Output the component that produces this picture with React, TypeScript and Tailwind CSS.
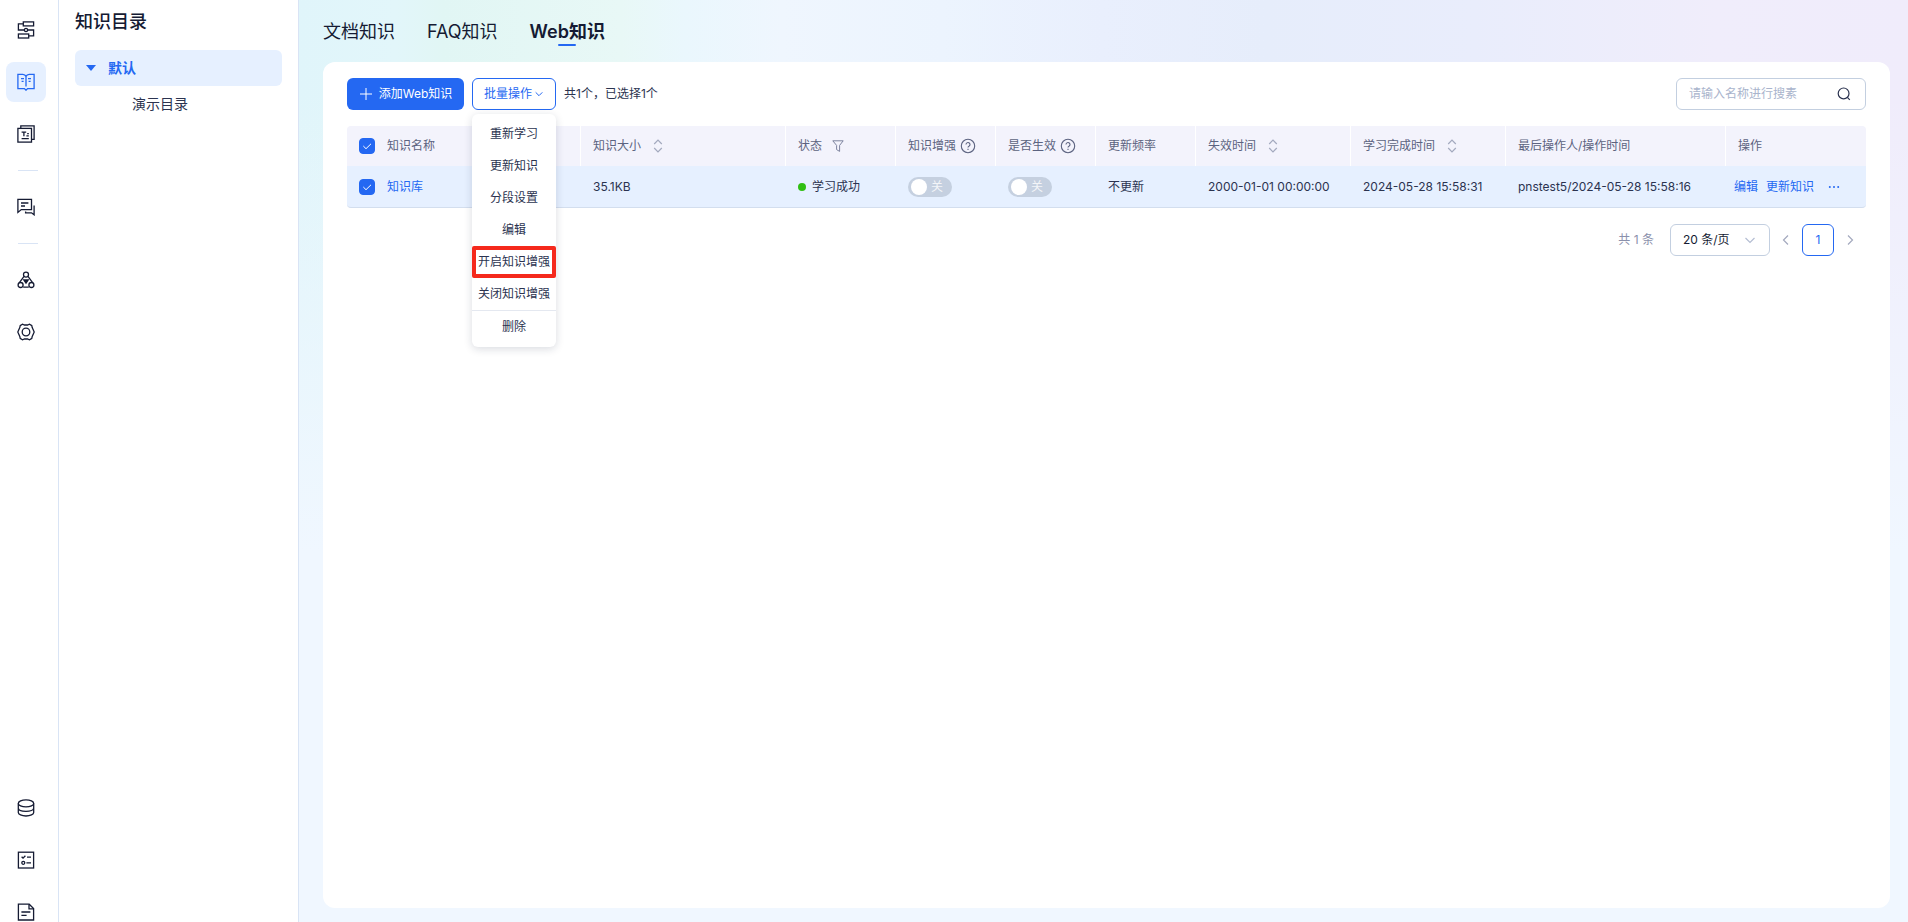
import { useState } from "react";
import type { ReactNode } from "react";

type WebKnowledge = {
  id: number;
  name: string;
  size: string;
  status: string;
  enhanced: boolean;
  enabled: boolean;
  frequency: string;
  expireAt: string;
  learnedAt: string;
  operator: string;
};

const initialRows: WebKnowledge[] = [
  {
    id: 1,
    name: "知识库",
    size: "35.1KB",
    status: "学习成功",
    enhanced: false,
    enabled: false,
    frequency: "不更新",
    expireAt: "2000-01-01 00:00:00",
    learnedAt: "2024-05-28 15:58:31",
    operator: "pnstest5/2024-05-28 15:58:16",
  },
];

const tabs = ["文档知识", "FAQ知识", "Web知识"];

const batchActions = ["重新学习", "更新知识", "分段设置", "编辑", "开启知识增强", "关闭知识增强", "删除"];

const Icon = ({ children }: { children: ReactNode }) => (
  <svg
    viewBox="0 0 18 18"
    className="w-[18px] h-[18px]"
    fill="none"
    stroke="currentColor"
    strokeWidth="1.3"
    aria-hidden="true"
  >
    {children}
  </svg>
);

const FlowIcon = () => (
  <Icon>
    <rect x="6.3" y="0.9" width="10.3" height="4" />
    <path d="M6.3 2.9H1.4V9h5.9M10.7 9h5.9v5.9h-4.9" />
    <circle cx="9" cy="9" r="1.6" />
    <rect x="1.4" y="13" width="10.3" height="4" />
  </Icon>
);

const BookIcon = () => (
  <Icon>
    <path d="M9 3.6C8.4 2 7.4 1.4 5.8 1.4H.9v14.2h6.5L9 17.2l1.6-1.6h6.5V1.4h-4.9C10.6 1.4 9.6 2 9 3.6v10" />
    <path d="M4 5.7h3M4.6 8.4h2M11 5.7h3M11.6 8.4h2" />
  </Icon>
);

const TemplateIcon = () => (
  <Icon>
    <rect x="0.9" y="3.4" width="13.6" height="13.7" />
    <path d="M3.8 3.4V.9h13.3v13.4h-2.6" />
    <path d="M4.6 7.2h4.6M6.9 7.2v4M10.2 8.6h1.6M9.4 10.9h2.4M4.6 13.6h7.2" />
  </Icon>
);

const ChatIcon = () => (
  <Icon>
    <path d="M.9 1.4h13.6v10.2H4.3L.9 14.4z" />
    <path d="M4 5h7.4M4 8h4M17.1 7.4v9.4l-2.6-2H8.6v-1.2" />
  </Icon>
);

const NetworkIcon = () => (
  <Icon>
    <circle cx="9" cy="3.6" r="2.5" />
    <circle cx="3.6" cy="14" r="2.5" />
    <circle cx="14.4" cy="14" r="2.5" />
    <path d="M7 5.4L2.4 11.6M11 5.4l4.6 6.2M6.2 16.2h5.6" />
    <path d="M6.8 9h4.4L9 12.2z" fill="currentColor" />
  </Icon>
);

const SettingIcon = () => (
  <Icon>
    <path
      d="M5.4 1.2L7.2 2h3.6l1.8-.8 2.2 1.4.4 2L17.2 9l-2 4.4-.4 2-2.2 1.4-1.8-.8H7.2l-1.8.8-2.2-1.4-.4-2L.8 9l2-4.4.4-2z"
      strokeLinejoin="round"
    />
    <circle cx="9" cy="9" r="3.8" />
  </Icon>
);

const DatabaseIcon = () => (
  <Icon>
    <ellipse cx="9" cy="4.4" rx="7.7" ry="3.5" />
    <path d="M1.3 4.4v9c0 2 3.4 3.6 7.7 3.6s7.7-1.6 7.7-3.6v-9M1.3 9c0 1.9 3.4 3.3 7.7 3.3s7.7-1.4 7.7-3.3" />
  </Icon>
);

const ChecklistIcon = () => (
  <Icon>
    <rect x="1.4" y="1.2" width="15.2" height="15.8" />
    <path d="M4.6 5.8l1.4 1.3 2.4-2.4M10 6.2h4M9.4 11.8H14" />
    <circle cx="6.3" cy="11.8" r="1.5" />
  </Icon>
);

const FileIcon = () => (
  <Icon>
    <path d="M1.4 1.2h10.8l4.4 4.4V17H1.4z" />
    <path d="M12 1.2v4.6h4.6M4.4 9h9M4.4 12.4h5.2" />
  </Icon>
);

const RailButton = ({ label, active, children }: { label: string; active?: boolean; children: ReactNode }) => (
  <button
    type="button"
    aria-label={label}
    className={`flex w-10 h-10 shrink-0 items-center justify-center rounded-lg ${
      active ? "bg-[#e6f0ff] text-[#2468f2]" : "text-[#151b33]"
    }`}
  >
    {children}
  </button>
);

const RailDivider = () => <div className="ml-3 my-1 w-5 h-px bg-[#d9e4f5]" />;

const Chevron = ({ d, className }: { d: string; className: string }) => (
  <svg viewBox="0 0 12 12" className={className} fill="none" stroke="currentColor" strokeWidth="1.2" aria-hidden="true">
    <path d={d} />
  </svg>
);

const Sorter = () => (
  <button type="button" aria-label="排序" className="text-[#a3a9be]">
    <svg viewBox="0 0 10 14" className="w-2.5 h-3.5" fill="none" stroke="currentColor" strokeWidth="1.2" aria-hidden="true">
      <path d="M1.2 5L5 1.2 8.8 5M1.2 9L5 12.8 8.8 9" />
    </svg>
  </button>
);

const HelpIcon = () => (
  <svg viewBox="0 0 16 16" className="w-4 h-4 text-[#5c6380]" fill="none" stroke="currentColor" strokeWidth="1.1" aria-hidden="true">
    <circle cx="8" cy="8" r="6.7" />
    <path d="M6 6.5a2 1.9 0 1 1 3.2 1.5C8.4 8.5 8 8.8 8 9.6M8 10.8v1.1" />
  </svg>
);

const Checkbox = ({ label, checked, onChange }: { label: string; checked: boolean; onChange: () => void }) => (
  <span className="grid w-4 h-4 shrink-0">
    <input
      type="checkbox"
      aria-label={label}
      checked={checked}
      onChange={onChange}
      className="col-start-1 row-start-1 appearance-none w-4 h-4 rounded-sm border border-[#c3cfe0] bg-white checked:border-[#2468f2] checked:bg-[#2468f2]"
    />
    <svg
      viewBox="0 0 16 16"
      className="col-start-1 row-start-1 w-4 h-4 pointer-events-none text-white"
      fill="none"
      stroke="currentColor"
      aria-hidden="true"
    >
      <path d="M4.3 8l2.7 2.7L12 5.8" />
    </svg>
  </span>
);

const Toggle = ({ label, on, onClick }: { label: string; on: boolean; onClick: () => void }) => (
  <button
    type="button"
    role="switch"
    aria-checked={on}
    aria-label={label}
    onClick={onClick}
    className={`flex w-11 h-5 items-center gap-1 rounded-full px-[3px] text-white ${
      on ? "flex-row-reverse bg-[#2468f2]" : "bg-[#c5d0e0]"
    }`}
  >
    <span className="w-4 h-4 shrink-0 rounded-full bg-white" />
    <span className="opacity-80">{on ? "开" : "关"}</span>
  </button>
);

const th = "border-r border-white px-3 text-left font-normal";

const App = () => {
  const [tab, setTab] = useState("Web知识");
  const [rows, setRows] = useState<WebKnowledge[]>(initialRows);
  const [selected, setSelected] = useState<number[]>([1]);
  const [menuOpen, setMenuOpen] = useState(true);
  const [keyword, setKeyword] = useState("");

  const allSelected = selected.length === rows.length;

  const toggleRow = (id: number) => {
    setSelected((prev) => (prev.includes(id) ? prev.filter((s) => s !== id) : [...prev, id]));
  };

  const toggleField = (id: number, field: "enhanced" | "enabled") => {
    setRows((prev) => prev.map((r) => (r.id === id ? { ...r, [field]: !r[field] } : r)));
  };

  return (
    <div className="flex h-screen overflow-hidden bg-white font-['Inter','Noto_Sans_CJK_SC',sans-serif] text-xs text-[#2b3350]">
      {/* ICON RAIL */}
      <nav className="flex w-[59px] shrink-0 flex-col border-r border-[#d9e4f5] pl-1.5 pt-2.5">
        <div className="flex flex-col gap-3">
          <RailButton label="流程">
            <FlowIcon />
          </RailButton>
          <RailButton label="知识" active>
            <BookIcon />
          </RailButton>
          <RailButton label="模板">
            <TemplateIcon />
          </RailButton>
          <RailDivider />
          <RailButton label="对话">
            <ChatIcon />
          </RailButton>
          <RailDivider />
          <RailButton label="模型">
            <NetworkIcon />
          </RailButton>
          <RailButton label="设置">
            <SettingIcon />
          </RailButton>
        </div>
        <div className="mt-auto flex h-[134px] flex-col gap-3 overflow-hidden">
          <RailButton label="数据">
            <DatabaseIcon />
          </RailButton>
          <RailButton label="任务">
            <ChecklistIcon />
          </RailButton>
          <RailButton label="文档">
            <FileIcon />
          </RailButton>
        </div>
      </nav>

      {/* DIRECTORY */}
      <aside className="w-60 shrink-0 border-r border-[#d9e4f5] px-4 pt-2">
        <h1 className="text-lg font-medium leading-7 text-[#151b33]">知识目录</h1>
        <ul className="mt-3.5 text-sm">
          <li>
            <button
              type="button"
              className="flex w-full h-9 items-center gap-3 rounded-md bg-[#e6f0ff] pl-[11px] font-semibold text-[#2468f2]"
            >
              <svg viewBox="0 0 10 6" className="w-2.5 h-1.5" fill="currentColor" aria-hidden="true">
                <path d="M0 0h10L5 6z" />
              </svg>
              默认
            </button>
          </li>
          <li>
            <button type="button" className="flex w-full h-9 items-center pl-[57px]">
              演示目录
            </button>
          </li>
        </ul>
      </aside>

      <main className="flex min-w-0 flex-1 flex-col bg-[linear-gradient(to_bottom,transparent_10%,#f0f7ff_60%),linear-gradient(to_right,#e0f5fa_0%,#e2f6fa_6%,#e1f6f4_9%,#e8f8f6_20%,#eaf7fd_24%,#eff6fe_30%,#ecf4fe_40%,#e9effd_50%,#e6edfb_60%,#e9edfc_73%,#f0edfb_88%,#f0ecfb_100%)] pl-6 pr-[18px] pb-3.5">
        {/* TABS */}
        <div className="flex h-[62px] gap-8 pt-5 text-lg leading-6 text-[#151b33]" role="tablist">
          {tabs.map((t) => (
            <button
              key={t}
              type="button"
              role="tab"
              aria-selected={t === tab}
              onClick={() => setTab(t)}
              className={`flex flex-col items-center ${t === tab ? "font-semibold" : ""}`}
            >
              {t}
              {t === tab && <span className="w-[18px] h-0.5 rounded-full bg-[#2468f2]" />}
            </button>
          ))}
        </div>

        <section className="flex-1 rounded-xl bg-white px-6 pt-4">
          {/* TOOLBAR */}
          <div className="flex items-center gap-2">
            <button
              type="button"
              className="flex w-[117px] h-8 items-center justify-center gap-1.5 whitespace-nowrap rounded-md bg-[#2468f2] text-white"
            >
              <svg viewBox="0 0 14 14" className="w-3.5 h-3.5 shrink-0" fill="none" stroke="currentColor" aria-hidden="true">
                <path d="M7 1v12M1 7h12" />
              </svg>
              添加Web知识
            </button>
            <div className="relative">
              <button
                type="button"
                aria-expanded={menuOpen}
                onClick={() => setMenuOpen(!menuOpen)}
                className="flex w-[84px] h-8 items-center justify-center gap-0.5 rounded-md border border-[#2468f2] text-[#2468f2]"
              >
                批量操作
                <Chevron d="M2 4L6 8 10 4" className="w-2.5 h-2.5" />
              </button>
              {menuOpen && (
                <ul className="absolute left-0 top-9 z-10 w-full rounded-md bg-white py-1 shadow-[0_2px_8px_rgba(20,30,60,0.16)]">
                  {batchActions.map((action) => (
                    <li key={action} className={action === "删除" ? "border-t border-[#e4e8f0]" : ""}>
                      <button
                        type="button"
                        className={`flex w-full h-8 items-center justify-center whitespace-nowrap ${
                          action === "开启知识增强" ? "rounded-xs border-4 border-[#f5291c]" : ""
                        }`}
                      >
                        {action}
                      </button>
                    </li>
                  ))}
                </ul>
              )}
            </div>
            <span>
              共{rows.length}个，已选择{selected.length}个
            </span>
            <label className="ml-auto flex w-[190px] h-8 items-center rounded-md border border-[#c3cfe0] pl-3 pr-3.5">
              <input
                type="text"
                aria-label="名称"
                placeholder="请输入名称进行搜素"
                value={keyword}
                onChange={(e) => setKeyword(e.target.value)}
                className="min-w-0 flex-1 outline-none placeholder:text-[#a9b4cc]"
              />
              <svg viewBox="0 0 14 14" className="w-3.5 h-3.5" fill="none" stroke="currentColor" strokeWidth="1.2" aria-hidden="true">
                <circle cx="6.6" cy="6.4" r="5.4" />
                <path d="M10.4 10.4l2.4 2.4" />
              </svg>
            </label>
          </div>

          {/* TABLE */}
          <table className="mt-4 w-full table-fixed border-separate border-spacing-0">
            <colgroup>
              <col className="w-[234px]" />
              <col />
              <col className="w-[110px]" />
              <col className="w-[100px]" />
              <col className="w-[100px]" />
              <col className="w-[100px]" />
              <col className="w-[155px]" />
              <col className="w-[155px]" />
              <col className="w-[220px]" />
              <col className="w-[140px]" />
            </colgroup>
            <thead>
              <tr className="h-10 text-[#5c6380] [&>th]:bg-[#f3f3fc]">
                <th className={`${th} rounded-tl`}>
                  <div className="flex items-center gap-3">
                    <Checkbox
                      label="全选"
                      checked={allSelected}
                      onChange={() => setSelected(allSelected ? [] : rows.map((r) => r.id))}
                    />
                    知识名称
                  </div>
                </th>
                <th className={th}>
                  <div className="flex items-center gap-3">
                    知识大小
                    <Sorter />
                  </div>
                </th>
                <th className={th}>
                  <div className="flex items-center gap-2.5">
                    状态
                    <svg viewBox="0 0 12 12" className="w-3 h-3 text-[#7d839e]" fill="none" stroke="currentColor" aria-hidden="true">
                      <path d="M.8 .8h10.4L7.6 5.4v6L4.6 9.6V5.4z" />
                    </svg>
                  </div>
                </th>
                <th className={th}>
                  <div className="flex items-center gap-1">
                    知识增强
                    <HelpIcon />
                  </div>
                </th>
                <th className={th}>
                  <div className="flex items-center gap-1">
                    是否生效
                    <HelpIcon />
                  </div>
                </th>
                <th className={th}>更新频率</th>
                <th className={th}>
                  <div className="flex items-center gap-3">
                    失效时间
                    <Sorter />
                  </div>
                </th>
                <th className={th}>
                  <div className="flex items-center gap-3">
                    学习完成时间
                    <Sorter />
                  </div>
                </th>
                <th className={th}>最后操作人/操作时间</th>
                <th className="rounded-tr px-3 text-left font-normal">操作</th>
              </tr>
            </thead>
            <tbody>
              {rows.map((row) => (
                <tr
                  key={row.id}
                  className="h-[42px] whitespace-nowrap [&>td]:border-b [&>td]:border-[#d3deee] [&>td]:bg-[#e6f0ff]"
                >
                  <td className="rounded-bl px-3">
                    <div className="flex items-center gap-3">
                      <Checkbox label={row.name} checked={selected.includes(row.id)} onChange={() => toggleRow(row.id)} />
                      <a href="#" className="text-[#2468f2]">
                        {row.name}
                      </a>
                    </div>
                  </td>
                  <td className="px-3">{row.size}</td>
                  <td className="px-3">
                    <div className="flex items-center gap-1.5">
                      <span className="w-2 h-2 rounded-full bg-[#30bf13]" />
                      {row.status}
                    </div>
                  </td>
                  <td className="px-3">
                    <Toggle label="知识增强" on={row.enhanced} onClick={() => toggleField(row.id, "enhanced")} />
                  </td>
                  <td className="px-3">
                    <Toggle label="是否生效" on={row.enabled} onClick={() => toggleField(row.id, "enabled")} />
                  </td>
                  <td className="px-3">{row.frequency}</td>
                  <td className="px-3">{row.expireAt}</td>
                  <td className="px-3">{row.learnedAt}</td>
                  <td className="px-3">{row.operator}</td>
                  <td className="rounded-br px-2">
                    <div className="flex items-center gap-2 text-[#2468f2]">
                      <button type="button">编辑</button>
                      <button type="button">更新知识</button>
                      <button type="button" aria-label="更多" className="ml-1.5">
                        <svg viewBox="0 0 12 4" className="w-3 h-1" fill="currentColor" aria-hidden="true">
                          <circle cx="1.8" cy="2" r="1" />
                          <circle cx="6" cy="2" r="1" />
                          <circle cx="10.2" cy="2" r="1" />
                        </svg>
                      </button>
                    </div>
                  </td>
                </tr>
              ))}
            </tbody>
          </table>

          {/* PAGINATION */}
          <div className="mt-4 flex items-center justify-end pr-2 text-[#8a90ab]">
            <span className="mr-4">共 {rows.length} 条</span>
            <label className="grid w-[100px] h-8 items-center text-[#151b33]">
              <select
                aria-label="每页条数"
                className="col-start-1 row-start-1 w-full h-8 appearance-none rounded-md border border-[#c3cfe0] bg-white px-3"
              >
                <option>20 条/页</option>
                <option>50 条/页</option>
              </select>
              <Chevron
                d="M1.5 4L6 8.5 10.5 4"
                className="col-start-1 row-start-1 mr-3.5 w-3 h-3 justify-self-end pointer-events-none text-[#b4bdd2]"
              />
            </label>
            <button type="button" aria-label="上一页" className="flex w-8 h-8 items-center justify-center text-[#a3a9be]">
              <Chevron d="M8 1.5L3.5 6 8 10.5" className="w-3 h-3" />
            </button>
            <button type="button" className="w-8 h-8 rounded-md border border-[#2468f2] text-[#2468f2]">
              1
            </button>
            <button type="button" aria-label="下一页" className="flex w-6 h-8 items-center justify-end pr-0.5 text-[#a3a9be]">
              <Chevron d="M4 1.5L8.5 6 4 10.5" className="w-3 h-3" />
            </button>
          </div>
        </section>
      </main>
    </div>
  );
};

export default App;
